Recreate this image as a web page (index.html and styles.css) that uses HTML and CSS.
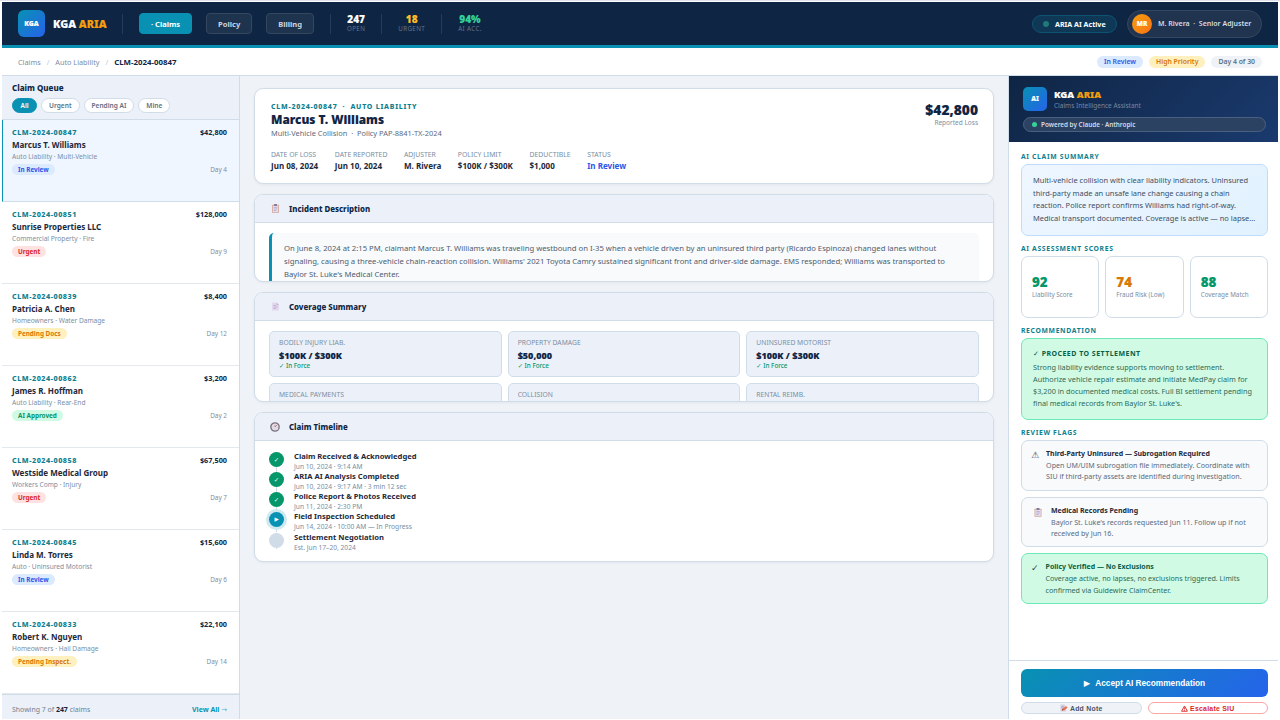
FILE: index.html
```html
<!DOCTYPE html>
<html lang="en">
<head>
  <meta charset="UTF-8" />
  <meta name="viewport" content="width=device-width, initial-scale=1.0"/>
  <title>KGA ARIA - Claims</title>
  <link rel="stylesheet" href="styles.css">
</head>
<body>

  <!-- Shared icons -->
  <svg class="sprite" width="0" height="0">
    <symbol id="icon-clipboard" viewBox="0 0 16 18">
      <rect x="1" y="1.500" width="14" height="16" rx="1" fill="#d3a596"/>
      <rect x="2.500" y="3" width="11" height="13" fill="#e2dcf0"/>
      <rect x="5" y="0" width="6" height="4" rx="1" fill="#8b7890"/>
      <path d="M4.500 7h7M4.500 10h7M4.500 13h5" stroke="#a79abf" stroke-width="1.200"/>
    </symbol>
    <symbol id="icon-doc" viewBox="0 0 16 18">
      <path d="M1 1h9l5 5v11H1z" fill="#e3d9ee"/>
      <path d="M10 1v5h5z" fill="#c3b3d3"/>
      <path d="M4 7h5M4 10h8M4 13h5" stroke="#b3a2c4" stroke-width="1.300"/>
    </symbol>
    <symbol id="icon-clock" viewBox="0 0 18 18">
      <circle cx="9" cy="9" r="7.500" fill="#e6e0ea" stroke="#77707c" stroke-width="2.400"/>
      <path d="M9 9l4-4M9 9V5" stroke="#b0697a" stroke-width="1.300"/>
      <path d="M5 9h1M9 13v-1M13 10h-1" stroke="#77707c"/>
    </symbol>
    <symbol id="icon-note" viewBox="0 0 18 18">
      <path d="M1 1h9l4 4v12H1z" fill="#d9cfe2"/>
      <path d="M3 6h6M3 9h5" stroke="#9b8fae" stroke-width="1.300"/>
      <path d="M4 15l2-5 8-5 3 3-7 6z" fill="#e8704a"/>
      <path d="M4 15l2-5 2 3z" fill="#8a5a4a"/>
    </symbol>
    <symbol id="icon-warn" viewBox="0 0 18 18">
      <path d="M9 2.500L16.500 16h-15z" fill="none" stroke="currentColor" stroke-width="2.400" stroke-linejoin="round"/>
      <path d="M9 6.500v5M9 12.800v1.900" stroke="currentColor" stroke-width="2.200"/>
    </symbol>
  </svg>

  <div class="app">
    <header class="topbar">
      <div class="brand">
        <div class="logo">KGA</div>
        <div class="brand-name">KGA <span>ARIA</span></div>
      </div>
      <div class="divider"></div>
      <nav class="nav">
        <a class="nav-btn active">· Claims</a>
        <a class="nav-btn">Policy</a>
        <a class="nav-btn">Billing</a>
      </nav>
      <div class="divider"></div>
      <div class="stat"><b>247</b><small>OPEN</small></div>
      <div class="divider"></div>
      <div class="stat amber"><b>18</b><small>URGENT</small></div>
      <div class="divider"></div>
      <div class="stat green"><b>94%</b><small>AI ACC.</small></div>
      <div class="top-right">
        <div class="ai-status"><i></i>ARIA AI Active</div>
        <div class="user"><div class="avatar">MR</div>M. Rivera &nbsp;·&nbsp; Senior Adjuster</div>
      </div>
    </header>

    <div class="crumbs">
      <span>Claims</span><em>/</em><span>Auto Liability</span><em>/</em><b>CLM-2024-00847</b>
      <div class="crumb-tags">
        <span class="tag blue">In Review</span>
        <span class="tag yellow">High Priority</span>
        <span class="tag gray">Day 4 of 30</span>
      </div>
    </div>

    <div class="columns">
      <!-- Claim queue -->
      <aside class="queue">
        <div class="queue-head">
          <h2>Claim Queue</h2>
          <div class="filters">
            <span class="filter on">All</span>
            <span class="filter">Urgent</span>
            <span class="filter">Pending AI</span>
            <span class="filter">Mine</span>
          </div>
        </div>
        <div class="claim selected">
          <div class="row"><span class="claim-id">CLM-2024-00847</span><b class="amount">$42,800</b></div>
          <div class="claim-name">Marcus T. Williams</div>
          <div class="claim-type">Auto Liability · Multi-Vehicle</div>
          <div class="row"><span class="badge blue">In Review</span><span class="day">Day 4</span></div>
        </div>
        <div class="claim">
          <div class="row"><span class="claim-id">CLM-2024-00851</span><b class="amount">$128,000</b></div>
          <div class="claim-name">Sunrise Properties LLC</div>
          <div class="claim-type">Commercial Property · Fire</div>
          <div class="row"><span class="badge red">Urgent</span><span class="day">Day 9</span></div>
        </div>
        <div class="claim">
          <div class="row"><span class="claim-id">CLM-2024-00839</span><b class="amount">$8,400</b></div>
          <div class="claim-name">Patricia A. Chen</div>
          <div class="claim-type">Homeowners · Water Damage</div>
          <div class="row"><span class="badge yellow">Pending Docs</span><span class="day">Day 12</span></div>
        </div>
        <div class="claim">
          <div class="row"><span class="claim-id">CLM-2024-00862</span><b class="amount">$3,200</b></div>
          <div class="claim-name">James R. Hoffman</div>
          <div class="claim-type">Auto Liability · Rear-End</div>
          <div class="row"><span class="badge mint">AI Approved</span><span class="day">Day 2</span></div>
        </div>
        <div class="claim">
          <div class="row"><span class="claim-id">CLM-2024-00858</span><b class="amount">$67,500</b></div>
          <div class="claim-name">Westside Medical Group</div>
          <div class="claim-type">Workers Comp · Injury</div>
          <div class="row"><span class="badge red">Urgent</span><span class="day">Day 7</span></div>
        </div>
        <div class="claim">
          <div class="row"><span class="claim-id">CLM-2024-00845</span><b class="amount">$15,600</b></div>
          <div class="claim-name">Linda M. Torres</div>
          <div class="claim-type">Auto · Uninsured Motorist</div>
          <div class="row"><span class="badge blue">In Review</span><span class="day">Day 6</span></div>
        </div>
        <div class="claim">
          <div class="row"><span class="claim-id">CLM-2024-00833</span><b class="amount">$22,100</b></div>
          <div class="claim-name">Robert K. Nguyen</div>
          <div class="claim-type">Homeowners · Hail Damage</div>
          <div class="row"><span class="badge yellow">Pending Inspect.</span><span class="day">Day 14</span></div>
        </div>
        <div class="queue-foot">
          <span>Showing 7 of <b>247</b> claims</span>
          <a>View All <span>→</span></a>
        </div>
      </aside>

      <!-- Claim detail -->
      <main class="detail">
        <section class="card summary">
          <div class="summary-top">
            <div>
              <div class="eyebrow">CLM-2024-00847 &nbsp;·&nbsp; AUTO LIABILITY</div>
              <h1>Marcus T. Williams</h1>
              <div class="sub">Multi-Vehicle Collision &nbsp;·&nbsp; Policy PAP-8841-TX-2024</div>
            </div>
            <div class="loss"><b>$42,800</b><span>Reported Loss</span></div>
          </div>
          <div class="facts">
            <div><span>DATE OF LOSS</span><b>Jun 08, 2024</b></div>
            <div><span>DATE REPORTED</span><b>Jun 10, 2024</b></div>
            <div><span>ADJUSTER</span><b>M. Rivera</b></div>
            <div><span>POLICY LIMIT</span><b>$100K / $300K</b></div>
            <div><span>DEDUCTIBLE</span><b>$1,000</b></div>
            <div><span>STATUS</span><b class="status">In Review</b></div>
          </div>
        </section>

        <section class="card incident">
          <div class="card-head"><svg><use href="#icon-clipboard"/></svg><h3>Incident Description</h3></div>
          <div class="card-body">
            <p class="narrative">On June 8, 2024 at 2:15 PM, claimant Marcus T. Williams was traveling westbound on I-35 when a vehicle driven by an uninsured third party (Ricardo Espinoza) changed lanes without<br>signaling, causing a three-vehicle chain-reaction collision. Williams' 2021 Toyota Camry sustained significant front and driver-side damage. EMS responded; Williams was transported to<br>Baylor St. Luke's Medical Center.</p>
          </div>
        </section>

        <section class="card coverage">
          <div class="card-head"><svg><use href="#icon-doc"/></svg><h3>Coverage Summary</h3></div>
          <div class="card-body coverage-grid">
            <div class="cover"><span>BODILY INJURY LIAB.</span><b>$100K / $300K</b><small>✓ In Force</small></div>
            <div class="cover"><span>PROPERTY DAMAGE</span><b>$50,000</b><small>✓ In Force</small></div>
            <div class="cover"><span>UNINSURED MOTORIST</span><b>$100K / $300K</b><small>✓ In Force</small></div>
            <div class="cover"><span>MEDICAL PAYMENTS</span></div>
            <div class="cover"><span>COLLISION</span></div>
            <div class="cover"><span>RENTAL REIMB.</span></div>
          </div>
        </section>

        <section class="card timeline">
          <div class="card-head"><svg><use href="#icon-clock"/></svg><h3>Claim Timeline</h3></div>
          <div class="card-body">
            <div class="event"><i class="dot">✓</i><div><b>Claim Received &amp; Acknowledged</b><span>Jun 10, 2024 · 9:14 AM</span></div></div>
            <div class="event"><i class="dot">✓</i><div><b>ARIA AI Analysis Completed</b><span>Jun 10, 2024 · 9:17 AM · 3 min 12 sec</span></div></div>
            <div class="event"><i class="dot">✓</i><div><b>Police Report &amp; Photos Received</b><span>Jun 11, 2024 · 2:30 PM</span></div></div>
            <div class="event now"><i class="dot current">▶</i><div><b>Field Inspection Scheduled</b><span>Jun 14, 2024 · 10:00 AM — In Progress</span></div></div>
            <div class="event"><i class="dot todo"></i><div><b>Settlement Negotiation</b><span>Est. Jun 17–20, 2024</span></div></div>
          </div>
        </section>
      </main>

      <!-- Assistant -->
      <aside class="assistant">
        <div class="assistant-head">
          <div class="assistant-brand">
            <div class="ai-logo">AI</div>
            <div>
              <div class="assistant-name">KGA <span>ARIA</span></div>
              <div class="assistant-sub">Claims Intelligence Assistant</div>
            </div>
          </div>
          <div class="powered"><i></i>Powered by Claude · Anthropic</div>
        </div>
        <div class="assistant-body">
          <h4>AI CLAIM SUMMARY</h4>
          <div class="ai-summary">Multi-vehicle collision with clear liability indicators. Uninsured<br>third-party made an unsafe lane change causing a chain<br>reaction. Police report confirms Williams had right-of-way.<br>Medical transport documented. Coverage is active — no lapse...</div>

          <h4>AI ASSESSMENT SCORES</h4>
          <div class="scores">
            <div class="score"><b>92</b><span>Liability Score</span></div>
            <div class="score warn"><b>74</b><span>Fraud Risk (Low)</span></div>
            <div class="score"><b>88</b><span>Coverage Match</span></div>
          </div>

          <h4>RECOMMENDATION</h4>
          <div class="recommend">
            <b>✓ PROCEED TO SETTLEMENT</b>
            <p>Strong liability evidence supports moving to settlement.<br>Authorize vehicle repair estimate and initiate MedPay claim for<br>$3,200 in documented medical costs. Full BI settlement pending<br>final medical records from Baylor St. Luke's.</p>
          </div>

          <h4>REVIEW FLAGS</h4>
          <div class="flag">
            <i>⚠</i>
            <div><b>Third-Party Uninsured — Subrogation Required</b><p>Open UM/UIM subrogation file immediately. Coordinate with<br>SIU if third-party assets are identified during investigation.</p></div>
          </div>
          <div class="flag records">
            <svg><use href="#icon-clipboard"/></svg>
            <div><b>Medical Records Pending</b><p>Baylor St. Luke's records requested Jun 11. Follow up if not<br>received by Jun 16.</p></div>
          </div>
          <div class="flag verified">
            <i>✓</i>
            <div><b>Policy Verified — No Exclusions</b><p>Coverage active, no lapses, no exclusions triggered. Limits<br>confirmed via Guidewire ClaimCenter.</p></div>
          </div>
        </div>
        <div class="actions">
          <button class="accept"><span>▶</span> Accept AI Recommendation</button>
          <button class="note"><svg><use href="#icon-note"/></svg>Add Note</button>
          <button class="escalate"><svg><use href="#icon-warn"/></svg>Escalate SIU</button>
        </div>
      </aside>
    </div>
  </div>

</body>
</html>
```

FILE: styles.css
```css
* {
  box-sizing: border-box;
  margin: 0;
  padding: 0;
}

body {
  width: 1280px;
  height: 720px;
  padding: 1px 2px;
  overflow: hidden;
  background: #ffffff;
  border-top: 1px solid #dfe4ec;
  font-family: 'Noto Sans', 'DejaVu Sans', sans-serif;
  font-size: 7px;
  color: #0f2544;
}

i, em {
  font-style: normal;
}

h1, h2, h3, .claim-id, .eyebrow {
  font-weight: 800;
}

/* Extra-heavy text */
.logo, .ai-logo, .brand-name, .assistant-name, .stat b, .avatar,
h1, .loss b, .cover b, .score b {
  font-weight: 900;
  -webkit-text-stroke: 0.1px currentColor;
}

.sprite {
  position: absolute;
}

.app {
  height: 717px;
  display: flex;
  flex-direction: column;
  background: #eff3f8;
}

/* Top bar */
.topbar {
  height: 46px;
  flex: none;
  display: flex;
  align-items: center;
  gap: 16px;
  padding: 0 16px;
  background: #0f2544;
  border-bottom: 3px solid #0891b2;
  color: #ffffff;
}

.brand {
  display: flex;
  align-items: center;
  gap: 8px;
}

.logo {
  width: 27px;
  height: 27px;
  line-height: 28px;
  border-radius: 6px;
  background: linear-gradient(135deg, #0891b2, #2563eb);
  text-align: center;
  font-size: 6.8px;
}

.brand-name {
  width: 53px;
  font-size: 10.8px;
  white-space: nowrap;
}

.brand-name span {
  color: #f59e0b;
}

.divider {
  width: 1px;
  height: 20px;
  background: #283c58;
}

.nav {
  display: flex;
  gap: 14px;
}

.nav-btn {
  height: 21px;
  line-height: 20px;
  padding: 0 11px;
  border: 1px solid #34475f;
  border-radius: 4px;
  background: #1e334e;
  color: #cbd5e1;
  font-size: 7.55px;
  font-weight: 700;
}

.nav-btn.active {
  background: #0891b2;
  border-color: #0891b2;
  color: #ffffff;
}

.stat {
  display: flex;
  flex-direction: column;
  align-items: center;
}

.stat b {
  font-size: 10.1px;
  line-height: 11px;
}

.stat small {
  font-size: 6.2px;
  line-height: 8px;
  letter-spacing: 0.4px;
  color: #65748a;
}

.stat.amber b {
  color: #fbbf24;
}

.stat.green b {
  color: #34d399;
}

.top-right {
  margin-left: auto;
  display: flex;
  align-items: center;
  gap: 10px;
}

.ai-status {
  width: 85px;
  height: 18px;
  display: flex;
  align-items: center;
  gap: 6px;
  padding-left: 10px;
  border: 1px solid #0d5471;
  border-radius: 9px;
  background: #0e3856;
  font-size: 7.1px;
  font-weight: 700;
}

.ai-status i {
  width: 6px;
  height: 6px;
  border-radius: 50%;
  background: #1f7a78;
}

.user {
  width: 135px;
  height: 28px;
  display: flex;
  align-items: center;
  gap: 6px;
  padding-left: 4px;
  border: 1px solid #35475f;
  border-radius: 14px;
  background: #21344f;
  color: #d5dbe3;
  font-size: 7px;
  font-weight: 600;
  white-space: nowrap;
}

.avatar {
  width: 20px;
  height: 20px;
  line-height: 20px;
  border-radius: 50%;
  background: linear-gradient(135deg, #f59e0b, #f97316);
  color: #ffffff;
  text-align: center;
  font-size: 6.4px;
}

/* Breadcrumbs */
.crumbs {
  height: 28px;
  flex: none;
  display: flex;
  align-items: center;
  padding: 0 16px;
  background: #ffffff;
  border-bottom: 1px solid #d0dce8;
  color: #7b8ea3;
  font-size: 7.25px;
}

.crumbs em {
  margin: 0 6px;
  color: #bcc8d6;
}

.crumbs b {
  font-size: 7.85px;
  color: #0f2544;
}

.crumb-tags {
  margin-left: auto;
  display: flex;
  gap: 6px;
}

.tag {
  height: 12px;
  line-height: 12px;
  padding: 0 7px;
  border-radius: 6px;
  font-size: 6.85px;
  font-weight: 600;
}

.blue {
  background: #dbeafe;
  color: #2f55e6;
}

.yellow {
  background: #fef0bf;
  color: #d97706;
}

.gray {
  background: #eff3f8;
  color: #5b7083;
}

.red {
  background: #fee2e2;
  color: #dc2626;
}

.mint {
  background: #d1fae5;
  color: #059669;
}

.columns {
  flex: 1;
  min-height: 0;
  display: grid;
  grid-template-columns: 238px 768px 270px;
}

/* Claim queue */
.queue {
  background: #ffffff;
  border-right: 1px solid #d0dce8;
  display: flex;
  flex-direction: column;
}

.queue-head {
  height: 44px;
  padding: 6px 10px 0;
  background: #ecf1f9;
  border-bottom: 1px solid #d0dce8;
}

.queue-head h2 {
  font-size: 8px;
  line-height: 12px;
}

.filters {
  display: flex;
  gap: 4px;
  margin-top: 4px;
}

.filter {
  height: 15px;
  line-height: 13px;
  padding: 0 7px;
  border: 1px solid #d0dce8;
  border-radius: 8px;
  background: #ffffff;
  color: #5b7083;
  font-size: 6.55px;
  font-weight: 600;
}

.filter.on {
  padding: 0 7.5px;
  background: #0891b2;
  border-color: #0891b2;
  color: #ffffff;
}

.claim {
  height: 82px;
  padding: 7px 12px 0 10px;
  border-bottom: 1px solid #e2e8ee;
}

.claim.selected {
  padding-left: 9px;
  border-left: 1px solid #0891b2;
  background: #eff6ff;
  border-bottom-color: #d0dce8;
}

.row {
  display: flex;
  align-items: center;
  justify-content: space-between;
}

.claim-id {
  font-size: 7.2px;
  line-height: 11px;
  letter-spacing: 0.52px;
  color: #0e7f8f;
}

.amount {
  font-size: 7.3px;
  line-height: 11px;
}

.claim-name {
  font-size: 8.03px;
  line-height: 14px;
  font-weight: 700;
  color: #1e293b;
}

.claim-type {
  font-size: 6.6px;
  line-height: 10px;
  color: #7b8ea3;
}

.claim .row:last-child {
  margin-top: 2px;
}

.badge {
  height: 11px;
  line-height: 11px;
  padding: 0 6px;
  border-radius: 6px;
  font-size: 6.35px;
  font-weight: 700;
}

.day {
  font-size: 6.4px;
  color: #7b8ea3;
}

.queue-foot {
  flex: 1;
  display: flex;
  justify-content: space-between;
  align-items: center;
  padding: 5px 12px 0 10px;
  background: #ecf1f9;
  border-top: 1px solid #d0dce8;
  color: #6b7f93;
  font-size: 6.95px;
}

.queue-foot b {
  color: #0f2544;
}

.queue-foot a {
  color: #0891b2;
  font-weight: 700;
}

.queue-foot a span {
  font-weight: 400;
  opacity: 0.7;
}

/* Claim detail */
.detail {
  padding: 12px 14px;
  display: flex;
  flex-direction: column;
  gap: 10px;
}

.card {
  overflow: hidden;
  background: #ffffff;
  border: 1px solid #d0dce8;
  border-radius: 9px;
  box-shadow: 0 1px 3px rgba(15, 37, 68, 0.06);
}

.summary {
  height: 96px;
  padding: 12px 15px 0 16px;
}

.summary-top {
  display: flex;
  justify-content: space-between;
}

.eyebrow {
  font-size: 7px;
  line-height: 11px;
  letter-spacing: 0.74px;
  color: #0e7f8f;
}

.summary h1 {
  font-size: 11.8px;
  line-height: 15px;
}

.sub {
  font-size: 7.43px;
  line-height: 12px;
  color: #5b6b80;
}

.loss {
  display: flex;
  flex-direction: column;
  align-items: flex-end;
}

.loss b {
  font-size: 13.8px;
  line-height: 18px;
}

.loss span {
  font-size: 6.5px;
  line-height: 7px;
  color: #7b8ea3;
}

.facts {
  display: flex;
  gap: 16.6px;
  margin-top: 10px;
}

.facts span,
.facts b {
  display: block;
}

.facts span {
  font-size: 6.85px;
  line-height: 11.5px;
  color: #7b8ea3;
}

.facts b {
  font-size: 8.05px;
  line-height: 10px;
  color: #1e293b;
}

.facts .status {
  color: #2f55e6;
}

.card-head {
  height: 28px;
  display: flex;
  align-items: center;
  padding-left: 16px;
  background: #ecf1f9;
  border-bottom: 1px solid #d0dce8;
}

.card-head svg {
  width: 9px;
  height: 9px;
  margin-right: 9px;
}

.card-head h3 {
  padding-top: 1px;
  font-size: 7.85px;
}

.card-body {
  padding: 10px 14px;
}

.incident {
  height: 88px;
}

.narrative {
  height: 60px;
  padding: 8.5px 12px;
  border-left: 3px solid #0891b2;
  border-radius: 5px;
  background: #f8fafc;
  color: #4e5d70;
  font-size: 7.69px;
  line-height: 13.3px;
  white-space: nowrap;
}

.coverage {
  height: 110px;
}

.coverage-grid {
  display: grid;
  grid-template-columns: repeat(3, 1fr);
  gap: 6px;
}

.cover {
  height: 46px;
  padding: 5px 9px;
  border: 1px solid #d0dce8;
  border-radius: 5px;
  background: #ecf1f9;
}

.cover span,
.cover b,
.cover small {
  display: block;
}

.cover span {
  font-size: 6.75px;
  line-height: 11px;
  color: #7b8ea3;
}

.cover b {
  font-size: 9px;
  line-height: 15px;
}

.cover small {
  font-size: 6.3px;
  line-height: 6px;
  font-weight: 500;
  color: #059669;
}

.timeline {
  height: 150px;
}

.timeline .card-head svg {
  width: 10px;
  height: 10px;
  margin: 1px 9px 0 -1px;
}

.timeline .card-body {
  padding-top: 9px;
}

.event {
  position: relative;
  height: 20px;
  display: flex;
  gap: 10px;
}

.event.now {
  height: 21px;
}

.event::before {
  content: '';
  position: absolute;
  left: 7px;
  top: 2px;
  width: 1px;
  height: 20px;
  background: #d0dce8;
}

.event:last-child::before {
  height: 16px;
}

.dot {
  position: relative;
  width: 15px;
  height: 15px;
  margin-top: 2px;
  line-height: 15px;
  border-radius: 50%;
  background: #059669;
  color: #ffffff;
  text-align: center;
  font-size: 6.5px;
}

.dot.current {
  background: #0891b2;
  box-shadow: 0 0 0 3px #cee9f0;
  font-size: 5.5px;
}

.dot.todo {
  background: #d0dce8;
}

.event b,
.event span {
  display: block;
}

.event b {
  font-size: 7.6px;
  line-height: 12px;
  color: #1e293b;
}

.event span {
  font-size: 6.65px;
  line-height: 9px;
  color: #7b8ea3;
}

/* Assistant */
.assistant {
  background: #ffffff;
  border-left: 1px solid #d0dce8;
  display: flex;
  flex-direction: column;
}

.assistant-head {
  height: 66px;
  padding: 11px 12px 0 14px;
  background: linear-gradient(135deg, #0f2544, #1a3a6e);
  color: #ffffff;
}

.assistant-brand {
  display: flex;
  gap: 7px;
}

.ai-logo {
  width: 24px;
  height: 24px;
  line-height: 23px;
  border-radius: 5px;
  background: linear-gradient(135deg, #0891b2, #2563eb);
  text-align: center;
  font-size: 6.6px;
}

.assistant-name {
  font-size: 9.5px;
  line-height: 15px;
}

.assistant-name span {
  color: #f59e0b;
}

.assistant-sub {
  font-size: 6.5px;
  line-height: 8px;
  color: #7787a1;
}

.powered {
  height: 15px;
  display: flex;
  align-items: center;
  gap: 4px;
  margin-top: 6px;
  padding-left: 8px;
  border: 1px solid #4b6080;
  border-radius: 8px;
  background: #2c4263;
  color: #d3dae4;
  font-size: 6.35px;
  font-weight: 600;
}

.powered i {
  width: 5px;
  height: 5px;
  border-radius: 50%;
  background: #34d399;
}

.assistant-body {
  flex: 1;
  padding: 8px 10px 0 12px;
}

.assistant-body h4 {
  height: 12px;
  margin-bottom: 2px;
  line-height: 13px;
  font-size: 6.8px;
  font-weight: 700;
  letter-spacing: 0.66px;
  color: #0e7f8f;
}

.ai-summary {
  height: 72px;
  margin-bottom: 6px;
  padding: 9px 11px;
  border: 1px solid #bfdbfe;
  border-radius: 7px;
  background: linear-gradient(135deg, #eff6ff, #e0f2fe);
  color: #3d4f66;
  font-size: 7.47px;
  line-height: 12.7px;
  white-space: nowrap;
}

.scores {
  display: grid;
  grid-template-columns: repeat(3, 1fr);
  gap: 6px;
  margin-bottom: 6px;
}

.score {
  height: 62px;
  padding: 17px 10px 0;
  border: 1px solid #d0dce8;
  border-radius: 7px;
  color: #059669;
  white-space: nowrap;
}

.score.warn {
  color: #d97706;
}

.score b,
.score span {
  display: block;
}

.score b {
  font-size: 13.4px;
  line-height: 17px;
}

.score span {
  font-size: 6.3px;
  line-height: 8px;
  color: #7b8ea3;
}

.recommend {
  height: 82px;
  margin-bottom: 6px;
  padding: 9px 11px;
  border: 1px solid #6ee7b7;
  border-radius: 7px;
  background: #d1fae5;
  color: #2b6b58;
  font-size: 7.3px;
  line-height: 12px;
  white-space: nowrap;
}

.recommend b {
  display: block;
  line-height: 12px;
  margin-bottom: 1px;
  font-size: 7px;
  letter-spacing: 0.47px;
  color: #065f46;
}

.flag {
  height: 51px;
  display: flex;
  gap: 7px;
  margin-bottom: 6px;
  padding: 6px 9px;
  border: 1px solid #d0dce8;
  border-radius: 7px;
  background: #f8fafc;
  color: #5b6b80;
  font-size: 7.13px;
  line-height: 11.2px;
  white-space: nowrap;
}

.flag i {
  margin-top: 2px;
  font-size: 9px;
  color: #334155;
}

.flag svg {
  width: 8px;
  height: 9px;
  margin: 4px 2px 0 3px;
}

.flag b {
  display: block;
  line-height: 13px;
  font-size: 7px;
  color: #1e293b;
}

.flag.records {
  height: 50px;
}

.flag.verified {
  border-color: #6ee7b7;
  background: #d1fae5;
  color: #2b6b58;
  line-height: 11.8px;
}

.flag.verified b {
  color: #065f46;
}

.actions {
  height: 59px;
  display: grid;
  grid-template-columns: 1fr 1fr;
  grid-template-rows: 28px 12px;
  gap: 5px 6px;
  padding: 8px 10px 0 12px;
  border-top: 1px solid #d0dce8;
}

.actions button {
  display: flex;
  align-items: center;
  justify-content: center;
  font-family: 'Liberation Sans', 'DejaVu Sans', sans-serif;
  font-size: 6.9px;
  font-weight: 700;
  letter-spacing: 0.25px;
  border-radius: 6px;
}

.actions .accept {
  grid-column: span 2;
  gap: 5px;
  border: none;
  background: linear-gradient(135deg, #0891b2, #2563eb);
  color: #ffffff;
  font-size: 8.3px;
  letter-spacing: 0;
}

.actions .note {
  border: 1px solid #d0dce8;
  background: #eff3f8;
  color: #475569;
}

.actions svg {
  width: 8px;
  height: 8px;
  margin-right: 2px;
}

.actions .escalate {
  border: 1px solid #fca5a5;
  background: #ffffff;
  color: #dc2626;
}

.escalate svg {
  width: 7px;
  height: 7px;
}
```
